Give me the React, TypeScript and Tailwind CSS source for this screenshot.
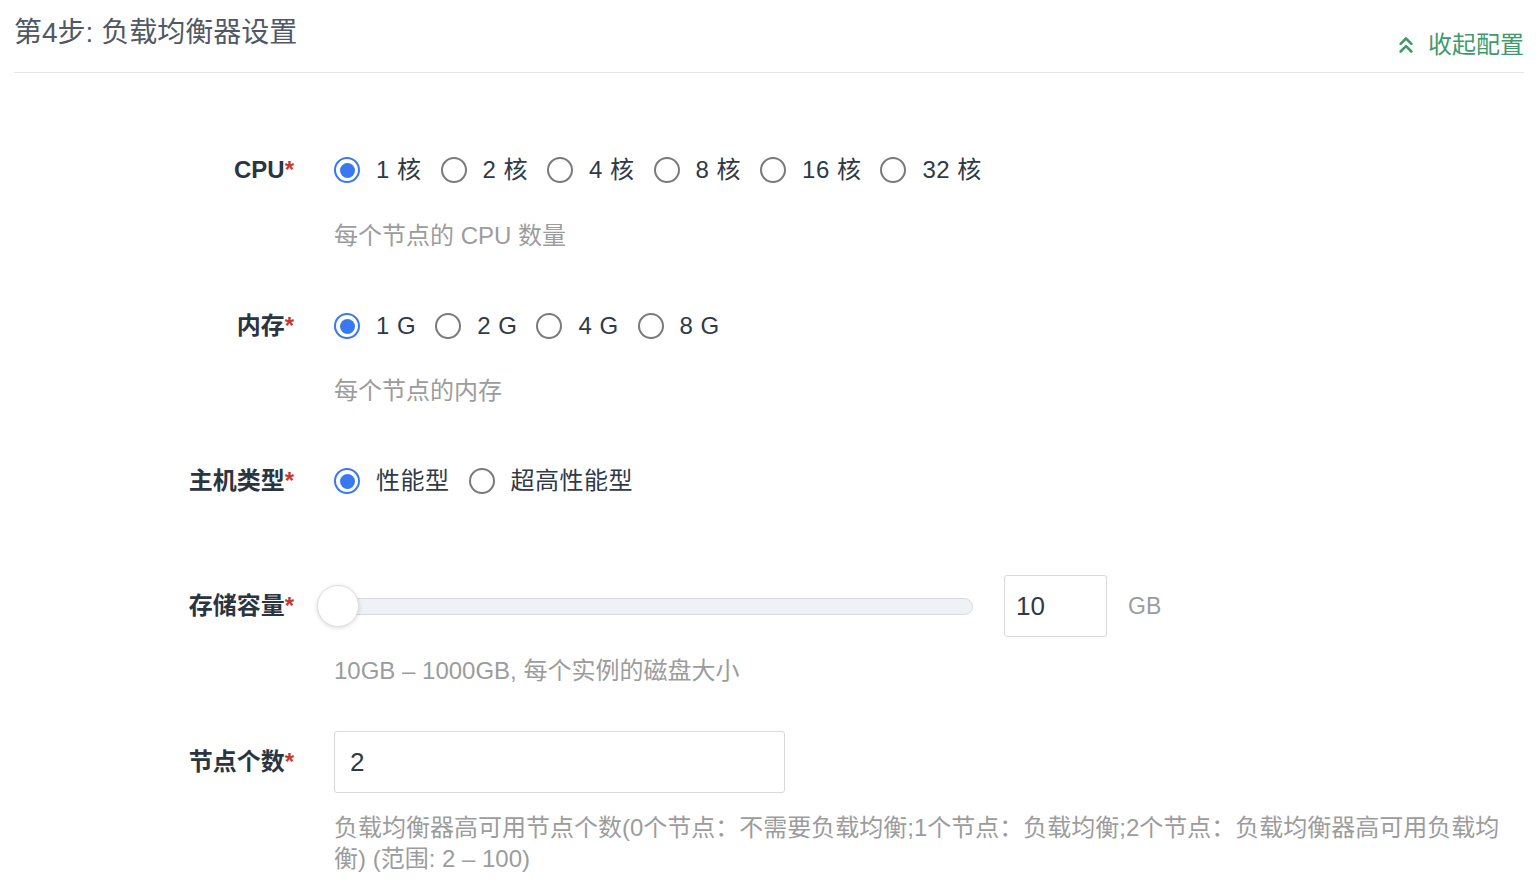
import { ChevronsUp } from "lucide-react";

const font = {
  fontFamily: '"Liberation Sans", "Noto Sans CJK SC", sans-serif',
};

function Radio({ checked, label }: { checked?: boolean; label: string }) {
  return (
    <label className="mr-[19px] flex items-center gap-4">
      {checked ? (
        <span className="flex size-[26px] items-center justify-center rounded-full border-2 border-[#3a78f2]">
          <span className="size-[15px] rounded-full bg-[#3a78f2]" />
        </span>
      ) : (
        <span className="size-[26px] rounded-full border-2 border-[#7a7a7a]" />
      )}
      <span className="text-[24px] tracking-[0.5px] text-[#2f3a46]">{label}</span>
    </label>
  );
}

function Label({ text }: { text: string }) {
  return (
    <div className="w-[294px] shrink-0 text-right text-[24px] font-semibold text-[#2b3540]">
      {text}
      <span className="text-[#c8372d]">*</span>
    </div>
  );
}

function Help({ children }: { children: React.ReactNode }) {
  return (
    <div className="ml-[334px] w-[1168px] text-[24px] leading-[31px] text-[#9c9c9c]">
      {children}
    </div>
  );
}

export default function App() {
  return (
    <div className="min-h-screen bg-white px-[14px]" style={font}>
      <div className="flex h-[73px] justify-between border-b border-[#e6e6e6]">
        <h1 className="mt-[13px] text-[28px] leading-[40px] text-[#4f5864]">第4步: 负载均衡器设置</h1>
        <button className="mb-[12px] flex items-center gap-[9px] self-end text-[24px] leading-[30px] text-[#3e9a6b]">
          <ChevronsUp size={26} strokeWidth={2.4} />
          收起配置
        </button>
      </div>

      <div className="-ml-[14px]">
        {/* CPU */}
        <div className="mt-[77px] flex h-10 items-center">
          <Label text="CPU" />
          <div className="ml-10 flex items-center">
            <Radio checked label="1 核" />
            <Radio label="2 核" />
            <Radio label="4 核" />
            <Radio label="8 核" />
            <Radio label="16 核" />
            <Radio label="32 核" />
          </div>
        </div>
        <div className="mt-[30px]">
          <Help>每个节点的 CPU 数量</Help>
        </div>

        {/* 内存 */}
        <div className="mt-[55px] flex h-10 items-center">
          <Label text="内存" />
          <div className="ml-10 flex items-center">
            <Radio checked label="1 G" />
            <Radio label="2 G" />
            <Radio label="4 G" />
            <Radio label="8 G" />
          </div>
        </div>
        <div className="mt-[29px]">
          <Help>每个节点的内存</Help>
        </div>

        {/* 主机类型 */}
        <div className="mt-[55px] flex h-10 items-center">
          <Label text="主机类型" />
          <div className="ml-10 flex items-center">
            <Radio checked label="性能型" />
            <Radio label="超高性能型" />
          </div>
        </div>

        {/* 存储容量 */}
        <div className="mt-[74px] flex h-[62px] items-center">
          <Label text="存储容量" />
          <div className="ml-[23px] flex items-center">
            <div className="relative flex h-[42px] w-[656px] items-center">
              <div className="ml-px h-[17px] w-full rounded-full border border-[#d5d9e0] bg-[#eef1f6]" />
              <div className="absolute left-0 top-0 size-[42px] rounded-full border border-[#dcdfe3] bg-white shadow-[0_1px_4px_rgba(0,0,0,0.15)]" />
            </div>
            <div className="ml-[31px] flex h-[62px] w-[103px] items-center rounded-[3px] border border-[#d6d9de] px-[11px] text-[26px] text-[#2f3a46]">
              10
            </div>
            <span className="ml-[21px] text-[23px] text-[#9c9c9c]">GB</span>
          </div>
        </div>
        <div className="mt-[18px]">
          <Help>10GB – 1000GB, 每个实例的磁盘大小</Help>
        </div>

        {/* 节点个数 */}
        <div className="mt-[45px] flex h-[62px] items-center">
          <Label text="节点个数" />
          <div className="ml-10 flex h-[62px] w-[451px] items-center rounded-[3px] border border-[#d6d9de] px-[15px] text-[26px] text-[#2f3a46]">
            2
          </div>
        </div>
        <div className="mt-[19px]">
          <Help>
            负载均衡器高可用节点个数(0个节点：不需要负载均衡;1个节点：负载均衡;2个节点：负载均衡器高可用负载均衡) (范围: 2 – 100)
          </Help>
        </div>
      </div>
    </div>
  );
}
